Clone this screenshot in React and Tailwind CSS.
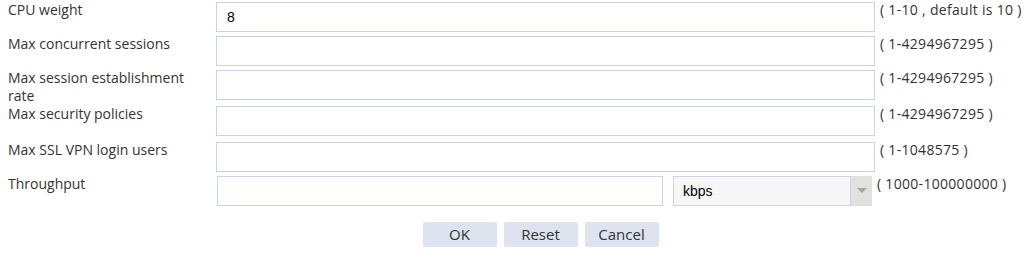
const rows = [
  { label: 'CPU weight', value: '8', hint: '( 1-10 , default is 10 )', h: 'h-[34px]' },
  { label: 'Max concurrent sessions', value: '', hint: '( 1-4294967295 )', h: 'h-[34px]' },
  { label: 'Max session establishment rate', value: '', hint: '( 1-4294967295 )', h: 'h-[36px]' },
  { label: 'Max security policies', value: '', hint: '( 1-4294967295 )', h: 'h-[36px]' },
  { label: 'Max SSL VPN login users', value: '', hint: '( 1-1048575 )', h: 'h-[34px]' },
]

const labelFont = "font-['Open_Sans','Noto_Sans_CJK_SC',sans-serif]"

function Row({ label, value, hint, h }) {
  return (
    <div className={`flex items-start ${h}`}>
      <div className={`w-[216px] shrink-0 pl-2 pr-6 pt-[1px] text-[14px] leading-[18px] text-[#333] ${labelFont}`}>
        {label}
      </div>
      <input
        defaultValue={value}
        className="mt-[2px] h-[30px] w-[659px] shrink-0 border border-[#c8d3e3] bg-white px-[10px] font-['Liberation_Sans',sans-serif] text-[14px] text-black outline-none"
      />
      <div className={`ml-[5px] pt-[1px] text-[14px] leading-[18px] tracking-[0.3px] text-[#333] ${labelFont}`}>{hint}</div>
    </div>
  )
}

export default function App() {
  return (
    <div className="h-[255px] w-[1032px] bg-white">
      {rows.map((r) => (
        <Row key={r.label} {...r} />
      ))}

      {/* Throughput */}
      <div className="flex h-[34px] items-start">
        <div className={`w-[217px] shrink-0 pl-2 pt-[1px] text-[14px] leading-[18px] text-[#333] ${labelFont}`}>
          Throughput
        </div>
        <input className="mt-[2px] h-[30px] w-[446px] shrink-0 border border-[#c8d3e3] bg-white px-[10px] text-[14px] outline-none" />
        <div className="ml-[10px] mt-[2px] flex h-[30px] w-[199px] shrink-0">
          <div className="flex flex-1 items-center border border-[#c8d3e3] bg-[#f7f7f7] px-[9px] font-['Liberation_Sans',sans-serif] text-[14px] text-black">
            kbps
          </div>
          <div className="flex w-[21px] items-center justify-center bg-[#e1e1e1]">
            <svg width="10" height="6" viewBox="0 0 10 6">
              <path d="M0 0h10L5 5z" fill="#a3a3a3" />
            </svg>
          </div>
        </div>
        <div className={`ml-[5px] pt-[1px] text-[14px] leading-[18px] tracking-[0.3px] text-[#333] ${labelFont}`}>( 1000-100000000 )</div>
      </div>

      {/* Buttons */}
      <div className="mt-[14px] flex justify-center gap-[7px] pl-[49px]">
        {['OK', 'Reset', 'Cancel'].map((b) => (
          <button
            key={b}
            className={`h-[25px] w-[74px] rounded-[2px] bg-[#dde3ef] text-[15px] leading-[25px] text-[#333] ${labelFont}`}
          >
            {b}
          </button>
        ))}
      </div>
    </div>
  )
}
